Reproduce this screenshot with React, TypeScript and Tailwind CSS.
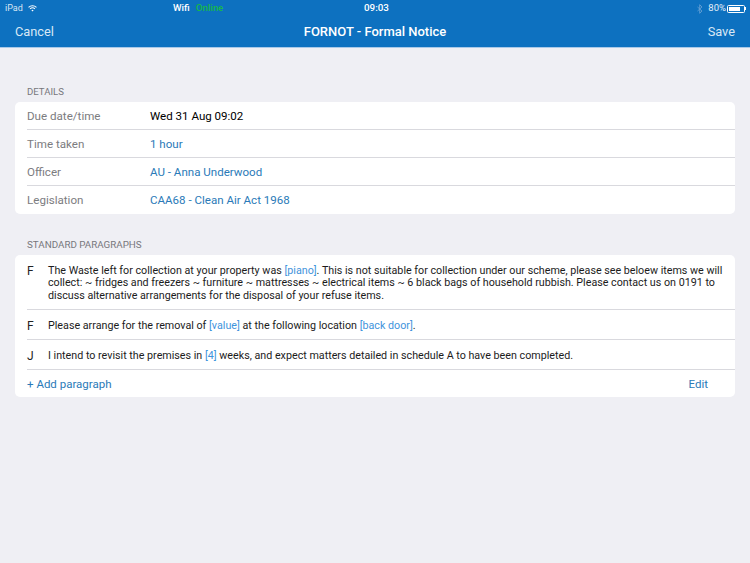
import React from "react";

const Row = ({ label, value, blue, last }: { label: string; value: string; blue?: boolean; last?: boolean }) => (
  <div className={`ml-3 flex h-[28px] items-center pt-[2px] border-b ${last ? "border-transparent" : "border-[#d9d9de]"}`}>
    <div className="w-[123px] text-[11.6px] text-[#7c7c80]">{label}</div>
    <div className={`text-[11.55px] ${blue ? "text-[#2a7ab8]" : "text-black"}`}>{value}</div>
  </div>
);

const Link = ({ children }: { children: React.ReactNode }) => <span className="text-[#3f94dc]">{children}</span>;

const Para = ({ code, children, h }: { code: string; children: React.ReactNode; h: string }) => (
  <div className={`ml-3 flex border-b border-[#d9d9de] pt-[10px] ${h}`}>
    <div className="w-[21px] shrink-0 text-[12px] leading-[12px] text-[#222]">{code}</div>
    <div className="w-[676px] text-[10.72px] leading-[12.3px] text-[#1c1c1c]">{children}</div>
  </div>
);

export default function App() {
  return (
    <div className="flex h-[563px] w-[750px] flex-col overflow-hidden bg-[#efeff4] font-['Roboto','Liberation_Sans',sans-serif]">
      <header className="h-[48px] shrink-0 border-b border-[#a9c9e8] bg-[#0d71c0] text-white">
        <div className="relative flex h-[17px] items-center justify-between pl-[5px] pr-[4px] text-[9.5px]">
          <div className="flex items-center gap-[5px] text-[#d7e6f4]">
            <span className="text-[9px]">iPad</span>
            <svg width="9" height="7" viewBox="0 0 20 16" fill="none" stroke="white" strokeWidth="2.4">
              <path d="M1 5.5a13 13 0 0 1 18 0" />
              <path d="M4.5 9a8 8 0 0 1 11 0" />
              <path d="M10 15l-2.6-3a3.6 3.6 0 0 1 5.2 0z" fill="white" stroke="none" />
            </svg>
          </div>
          <div className="absolute left-[173px] top-[1px] flex gap-[6px] text-[9.7px] font-medium">
            <span>Wifi</span>
            <span className="text-[#18b84a]">Online</span>
          </div>
          <span className="absolute left-[364px] top-[1px] text-[9.8px] font-medium">09:03</span>
          <div className="flex items-center">
            <svg width="6" height="10" viewBox="0 0 6 10" fill="none" stroke="#6fa5d6" strokeWidth="0.8">
              <path d="M0.5 3l4.5 4-2.3 2.3V0.7L5 3 0.5 7" />
            </svg>
            <span className="ml-[5px] text-[#e3eef8]">80%</span>
            <div className="ml-[1px] flex items-center">
              <div className="h-[8px] w-[18px] rounded-[1.5px] border border-white p-[1px]">
                <div className="h-full w-[80%] bg-white" />
              </div>
              <div className="h-[3px] w-[1px] bg-white" />
            </div>
          </div>
        </div>
        <div className="relative flex h-[30px] items-center justify-between px-[15px] text-[12.8px]">
          <span className="text-[#d9e8f5]">Cancel</span>
          <span className="absolute left-0 right-0 text-center text-[13px] font-medium">FORNOT - Formal Notice</span>
          <span className="text-[#d9e8f5]">Save</span>
        </div>
      </header>

      <main className="px-[15px]">
        <h2 className="mt-[37px] h-[17px] pl-3 text-[9.6px] leading-[13px] text-[#77777c]">DETAILS</h2>
        <section className="overflow-hidden rounded-[5px] bg-white">
          <Row label="Due date/time" value="Wed 31 Aug 09:02" />
          <Row label="Time taken" value="1 hour" blue />
          <Row label="Officer" value="AU - Anna Underwood" blue />
          <Row label="Legislation" value="CAA68 - Clean Air Act 1968" blue last />
        </section>

        <h2 className="mt-[24px] h-[17px] pl-3 text-[9.8px] leading-[13px] text-[#77777c]">STANDARD PARAGRAPHS</h2>
        <section className="overflow-hidden rounded-[5px] bg-white">
          <Para code="F" h="h-[55px]">
            The Waste left for collection at your property was <Link>[piano]</Link>. This is not suitable for collection under our scheme, please see beloew items we will collect: ~ fridges and freezers ~ furniture ~ mattresses ~ electrical items ~ 6 black bags of household rubbish. Please contact us on 0191 to discuss alternative arrangements for the disposal of your refuse items.
          </Para>
          <Para code="F" h="h-[30px]">
            Please arrange for the removal of <Link>[value]</Link> at the following location <Link>[back door]</Link>.
          </Para>
          <Para code="J" h="h-[30px]">
            I intend to revisit the premises in <Link>[4]</Link> weeks, and expect matters detailed in schedule A to have been completed.
          </Para>
          <div className="flex h-[27px] items-center justify-between pl-3 pr-[27px] pt-[3px] text-[11.5px] text-[#2a7ab8]">
            <span>+ Add paragraph</span>
            <span>Edit</span>
          </div>
        </section>
      </main>
    </div>
  );
}
